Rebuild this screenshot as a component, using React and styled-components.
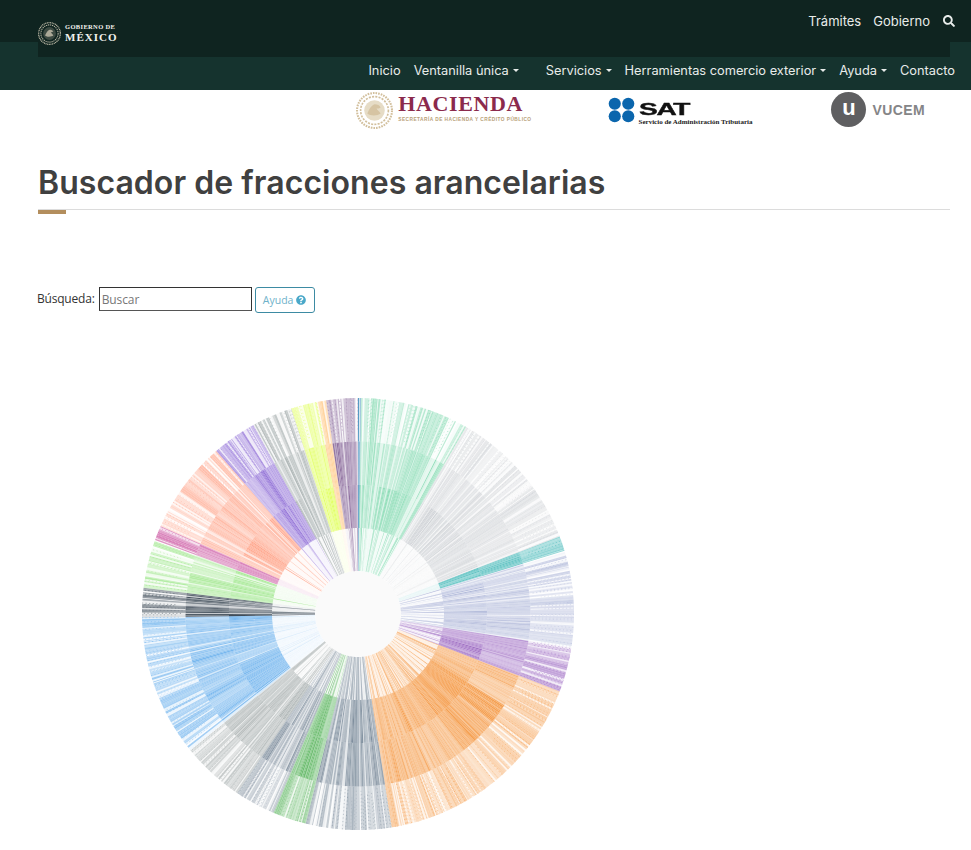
import { useMemo } from "react";
import styled, { createGlobalStyle } from "styled-components";
import { FaQuestionCircle, FaSearch } from "react-icons/fa";

const GlobalStyle = createGlobalStyle`
  body {
    margin: 0;
    background: #fff;
    font-family: "Open Sans", "Liberation Sans", sans-serif;
  }
`;

const Header = styled.header`
  height: 90px;
  background: linear-gradient(#0f2420 42px, #15332e 42px);
`;

const TopBar = styled.div`
  height: 57px;
  margin: 0 21px 0 38px;
  background: #0f2420;
  display: flex;
  justify-content: space-between;
  align-items: flex-start;
`;

const Brand = styled.div`
  display: flex;
  align-items: center;
  gap: 4px;
  padding-top: 22px;
  color: #f2f2ee;
  font-family: "Liberation Serif", serif;
  font-weight: 700;
`;

const BrandText = styled.div`
  display: flex;
  flex-direction: column;
  line-height: 1;
`;

const BrandSmall = styled.span`
  font-size: 6.5px;
  letter-spacing: 0.35px;
`;

const BrandBig = styled.span`
  font-size: 11px;
  letter-spacing: 1px;
  margin-top: 1px;
`;

const TopLinks = styled.div`
  display: flex;
  align-items: center;
  gap: 12px;
  padding-top: 13px;
  margin-right: -5px;
  color: #e8ecea;
  font-family: Inter, sans-serif;
  font-size: 13px;
  line-height: 17px;
`;

const SearchIcon = styled(FaSearch)`
  font-size: 12px;
  margin: -1px 0 0 1px;
`;

const Nav = styled.nav`
  height: 26px;
  display: flex;
  justify-content: flex-end;
  align-items: center;
  gap: 13px;
  padding-right: 16px;
  color: #e8ecea;
  font-family: Inter, sans-serif;
  font-size: 12.8px;
`;

const NavItem = styled.a`
  display: flex;
  align-items: center;
  gap: 4px;
  margin-right: ${(p) => p.$extra || 0}px;
`;

const Caret = styled.i`
  width: 0;
  height: 0;
  border-left: 3.5px solid transparent;
  border-right: 3.5px solid transparent;
  border-top: 3px solid currentColor;
`;

const LogoRow = styled.div`
  height: 40px;
  display: flex;
  justify-content: flex-end;
  align-items: center;
  padding-right: 46px;
`;

const Hacienda = styled.div`
  display: flex;
  align-items: center;
  gap: 5px;
  margin-right: 76px;
`;

const HaciendaText = styled.div`
  display: flex;
  flex-direction: column;
  line-height: 1;
  margin-top: -5px;
`;

const HaciendaName = styled.span`
  font-family: "Liberation Serif", serif;
  font-weight: 700;
  font-size: 22px;
  letter-spacing: 0.6px;
  color: #8b2a4c;
`;

const HaciendaSub = styled.span`
  margin-top: 3px;
  font-family: "Liberation Sans", sans-serif;
  font-weight: 700;
  font-size: 4.8px;
  letter-spacing: 0.45px;
  color: #b8a078;
  white-space: nowrap;
`;

const Sat = styled.div`
  display: flex;
  align-items: center;
  gap: 4px;
  margin-right: 79px;
  margin-top: -1px;
`;

const SatText = styled.div`
  display: flex;
  flex-direction: column;
  margin-top: 8px;
`;

const SatName = styled.span`
  font-family: "Liberation Sans", sans-serif;
  font-weight: 700;
  font-size: 17px;
  line-height: 15px;
  transform: scaleX(1.65);
  transform-origin: left;
  color: #111;
  letter-spacing: -0.8px;
  -webkit-text-stroke: 0.4px #111;
`;

const SatSub = styled.span`
  margin-top: 1px;
  font-family: "Liberation Serif", serif;
  font-weight: 700;
  font-size: 7px;
  line-height: 8px;
  color: #222;
  white-space: nowrap;
`;

const Vucem = styled.div`
  display: flex;
  align-items: center;
  gap: 6px;
`;

const VucemBadge = styled.div`
  width: 35px;
  height: 35px;
  margin-top: -2px;
  border-radius: 50%;
  background: #5f5f61;
  color: #fff;
  display: flex;
  align-items: center;
  justify-content: center;
  font-family: "Liberation Sans", sans-serif;
  font-weight: 700;
  font-size: 22px;
  padding-bottom: 3px;
  box-sizing: border-box;
`;

const VucemName = styled.span`
  font-family: "Liberation Sans", sans-serif;
  font-weight: 700;
  font-size: 14px;
  letter-spacing: 0.4px;
  color: #858587;
`;

const Main = styled.main`
  padding: 0 21px 0 38px;
`;

const Title = styled.h1`
  margin: 31px 0 0;
  font-family: Inter, sans-serif;
  font-weight: 600;
  font-size: 32px;
  line-height: 43px;
  letter-spacing: 0.05px;
  color: #404040;
`;

const Rule = styled.div`
  height: 1px;
  margin-top: 5px;
  background: #dcdcdc;
`;

const RuleAccent = styled.div`
  width: 28px;
  height: 4px;
  background: #b38e5d;
`;

const SearchRow = styled.div`
  display: flex;
  align-items: flex-start;
  margin: 73px 0 0 -1px;
  font-size: 12px;
  color: #333;
`;

const SearchLabel = styled.label`
  line-height: 24px;
  margin-right: 4px;
  letter-spacing: -0.2px;
`;

const SearchInput = styled.input`
  width: 153px;
  height: 24px;
  box-sizing: border-box;
  border: 1px solid #333;
  border-bottom-color: #555;
  padding: 0 2px 0 2px;
  font: inherit;
  letter-spacing: -0.1px;
  &::placeholder {
    color: #777;
    opacity: 1;
  }
`;

const HelpButton = styled.button`
  width: 60px;
  height: 26px;
  margin-left: 3px;
  padding: 0;
  display: flex;
  align-items: center;
  justify-content: center;
  gap: 3px;
  background: #fff;
  border: 1px solid #3d8ba3;
  border-radius: 3px;
  color: #6fb2ca;
  font: inherit;
  font-size: 10.5px;
`;

const ChartWrap = styled.div`
  margin: 84px 0 0 103px;
  width: 434px;
  height: 434px;
`;

const ChartSvg = styled.svg`
  display: block;
  filter: blur(0.3px);
`;

// angulos en grados, sentido horario desde arriba
const SECTORS = [
  { from: 0, to: 0.8, color: "#2f86b8", o: [0.5, 0.9, 0.9, 0.7], line: 0.6 },
  { from: 0.8, to: 30, color: "#7fd8ae", o: [0.1, 0.78, 0.68, 0.5], line: 0.4, gap: 0.3 },
  { from: 30, to: 69, color: "#cfd2d6", o: [0.1, 0.8, 0.62, 0.5], line: 0.1, gap: 0.2, lineO: 0.5 },
  { from: 69, to: 73, color: "#4fbcbc", o: [0.12, 0.85, 0.8, 0.6], line: 0.1 },
  { from: 73, to: 99, color: "#a9b2d6", o: [0.08, 0.72, 0.58, 0.5], line: 0.25, gap: 0.22 },
  { from: 99, to: 111, color: "#a06fc4", o: [0.08, 0.78, 0.62, 0.55], line: 0.3 },
  { from: 111, to: 171, color: "#f59f50", o: [0.14, 0.82, 0.72, 0.45], line: 0.4, hot: [122, 142] },
  { from: 171, to: 194, color: "#7f8f9e", o: [0.12, 0.85, 0.75, 0.5], line: 0.5, gap: 0.15 },
  { from: 194, to: 203, color: "#6fbe72", o: [0.1, 0.85, 0.85, 0.55], line: 0.3 },
  { from: 203, to: 214, color: "#8896a4", o: [0.1, 0.82, 0.75, 0.55], line: 0.5, gap: 0.2 },
  { from: 214, to: 231, color: "#aab1b1", o: [0.06, 0.78, 0.7, 0.5], line: 0.4, gap: 0.2 },
  { from: 231, to: 269, color: "#75b6ee", o: [0.08, 0.85, 0.8, 0.58], line: 0.1, gap: 0.1, lineO: 0.35 },
  { from: 269, to: 277, color: "#3f4c58", o: [0.08, 0.85, 0.85, 0.6], line: 0.25, gap: 0.25 },
  { from: 277, to: 290, color: "#9de68a", o: [0.1, 0.82, 0.65, 0.55], line: 0.02, gap: 0.15 },
  { from: 290, to: 294, color: "#cf62a8", o: [0.1, 0.9, 0.7, 0.65], line: 0.05, gap: 0.08 },
  { from: 294, to: 319, color: "#ffa68c", o: [0.06, 0.82, 0.68, 0.5], line: 0.06, gap: 0.1 },
  { from: 319, to: 331, color: "#9474d8", o: [0.08, 0.7, 0.65, 0.6], line: 0.12, hot: [323, 327] },
  { from: 331, to: 342, color: "#a2abab", o: [0.08, 0.78, 0.62, 0.55], line: 0.25, gap: 0.22 },
  { from: 342, to: 349, color: "#e2ff66", o: [0.1, 0.88, 0.85, 0.55], line: 0.03 },
  { from: 349, to: 351.5, color: "#ffc680", o: [0.1, 0.8, 0.75, 0.55], line: 0 },
  { from: 351.5, to: 360, color: "#8d6e9e", o: [0.08, 0.8, 0.75, 0.5], line: 0.3, gap: 0.15 },
];

const RINGS = [
  [43, 86],
  [86, 129],
  [129, 172.5],
  [172.5, 216],
];

function makeRandom(seed) {
  let s = seed;
  return () => {
    s = (s + 0x6d2b79f5) | 0;
    let t = Math.imul(s ^ (s >>> 15), 1 | s);
    t = (t + Math.imul(t ^ (t >>> 7), 61 | t)) ^ t;
    return ((t ^ (t >>> 14)) >>> 0) / 4294967296;
  };
}

const point = (r, deg) => {
  const a = ((deg - 90) * Math.PI) / 180;
  return [(217 + r * Math.cos(a)).toFixed(2), (217 + r * Math.sin(a)).toFixed(2)];
};

const slicePath = (r0, r1, a0, a1) => {
  const p = (r, a) => point(r, a).join(" ");
  return `M${p(r0, a0)}L${p(r1, a0)}A${r1} ${r1} 0 0 1 ${p(r1, a1)}L${p(r0, a1)}A${r0} ${r0} 0 0 0 ${p(r0, a0)}Z`;
};

function buildSunburst() {
  const rand = makeRandom(4127);
  const cells = [];
  const dashes = [];

  SECTORS.forEach((sector) => {
    let a = sector.from;
    while (a < sector.to - 0.01) {
      // grupo de hojas con un tono parecido
      const groupEnd = Math.min(sector.to, a + 1.2 + rand() * 3.5);
      const tone = [1, 0.75 + rand() * 0.4, 0.75 + rand() * 0.4, 0.7 + rand() * 0.5];
      while (a < groupEnd - 0.01) {
        const end = Math.min(groupEnd, a + 0.18 + rand() * 0.4);
        const hot = sector.hot && a >= sector.hot[0] && a < sector.hot[1];
        const gapped = rand() < (sector.gap || 0);
        RINGS.forEach(([r0, r1], ring) => {
          let opacity = sector.o[ring] * tone[ring] * (0.75 + rand() * 0.45);
          if (ring === 0 && rand() < sector.line) {
            opacity = (sector.lineO || 0.9) * (0.5 + rand() * 0.5);
          }
          if (ring === 3) opacity *= rand() < 0.22 ? 0.25 : 1;
          if (ring > 0 && gapped) opacity *= ring === 3 ? 0.15 : 0.35;
          if (hot && ring > 0 && ring < 3) opacity = Math.min(1, opacity * 1.3);
          cells.push({ d: slicePath(r0, r1, a, end), fill: sector.color, opacity });
        });
        if (rand() < 0.4) {
          dashes.push({
            from: point(172.5 + rand() * 14, (a + end) / 2),
            to: point(216, (a + end) / 2),
            stroke: sector.color,
            offset: (rand() * 4).toFixed(1),
            opacity: 0.35 + rand() * 0.5,
          });
        }
        a = end;
      }
    }
  });
  return { cells, dashes };
}

function Sunburst() {
  const { cells, dashes } = useMemo(buildSunburst, []);
  return (
    <ChartSvg width="434" height="434" viewBox="0 0 434 434">
      <circle cx="217" cy="217" r="43" fill="#fafafa" />
      {cells.map((c, i) => (
        <path key={i} d={c.d} fill={c.fill} fillOpacity={c.opacity} />
      ))}
      {dashes.map((d, i) => (
        <line
          key={i}
          x1={d.from[0]}
          y1={d.from[1]}
          x2={d.to[0]}
          y2={d.to[1]}
          stroke={d.stroke}
          strokeOpacity={d.opacity}
          strokeWidth="0.6"
          strokeDasharray="1.2 2.4"
          strokeDashoffset={d.offset}
        />
      ))}
    </ChartSvg>
  );
}

function Seal({ size, color, inner }) {
  return (
    <svg width={size} height={size} viewBox="0 0 36 36">
      <circle cx="18" cy="18" r="17" fill="none" stroke={color} strokeWidth="2" strokeDasharray="1.6 1" />
      <circle cx="18" cy="18" r="13.5" fill="none" stroke={color} strokeWidth="1.6" strokeDasharray="2 1.2" />
      <circle cx="18" cy="18" r="10" fill={inner} />
      <path
        d="M11 21c2-4 3-7 7-9 3 0 5 1 6 3-1 1-3 1-4 1 1 2 3 3 4 5-3 2-9 3-13 0z"
        fill={color}
        opacity="0.85"
      />
    </svg>
  );
}

function SatMark() {
  return (
    <svg width="27" height="26" viewBox="0 0 28 26">
      <circle cx="7" cy="6.5" r="6.3" fill="#0b66ad" />
      <circle cx="21" cy="6.5" r="6.3" fill="#0b66ad" />
      <circle cx="7" cy="19.5" r="6.3" fill="#0b66ad" />
      <circle cx="21" cy="19.5" r="6.3" fill="#0b66ad" />
    </svg>
  );
}

export default function App() {
  return (
    <>
      <GlobalStyle />
      <Header>
        <TopBar>
          <Brand>
            <Seal size={23} color="#bdb9a6" inner="#3c4a42" />
            <BrandText>
              <BrandSmall>GOBIERNO DE</BrandSmall>
              <BrandBig>MÉXICO</BrandBig>
            </BrandText>
          </Brand>
          <TopLinks>
            <span>Trámites</span>
            <span>Gobierno</span>
            <SearchIcon />
          </TopLinks>
        </TopBar>
        <Nav>
          <NavItem>Inicio</NavItem>
          <NavItem $extra={14}>
            Ventanilla única <Caret />
          </NavItem>
          <NavItem>
            Servicios <Caret />
          </NavItem>
          <NavItem>
            Herramientas comercio exterior <Caret />
          </NavItem>
          <NavItem>
            Ayuda <Caret />
          </NavItem>
          <NavItem>Contacto</NavItem>
        </Nav>
      </Header>
      <LogoRow>
        <Hacienda>
          <Seal size={37} color="#d2bf9c" inner="#e6dcc6" />
          <HaciendaText>
            <HaciendaName>HACIENDA</HaciendaName>
            <HaciendaSub>SECRETARÍA DE HACIENDA Y CRÉDITO PÚBLICO</HaciendaSub>
          </HaciendaText>
        </Hacienda>
        <Sat>
          <SatMark />
          <SatText>
            <SatName>SAT</SatName>
            <SatSub>Servicio de Administración Tributaria</SatSub>
          </SatText>
        </Sat>
        <Vucem>
          <VucemBadge>u</VucemBadge>
          <VucemName>VUCEM</VucemName>
        </Vucem>
      </LogoRow>
      <Main>
        <Title>Buscador de fracciones arancelarias</Title>
        <Rule />
        <RuleAccent />
        <SearchRow>
          <SearchLabel>Búsqueda:</SearchLabel>
          <SearchInput placeholder="Buscar" />
          <HelpButton>
            Ayuda <FaQuestionCircle size={10} color="#4aa8c9" />
          </HelpButton>
        </SearchRow>
        <ChartWrap>
          <Sunburst />
        </ChartWrap>
      </Main>
    </>
  );
}
